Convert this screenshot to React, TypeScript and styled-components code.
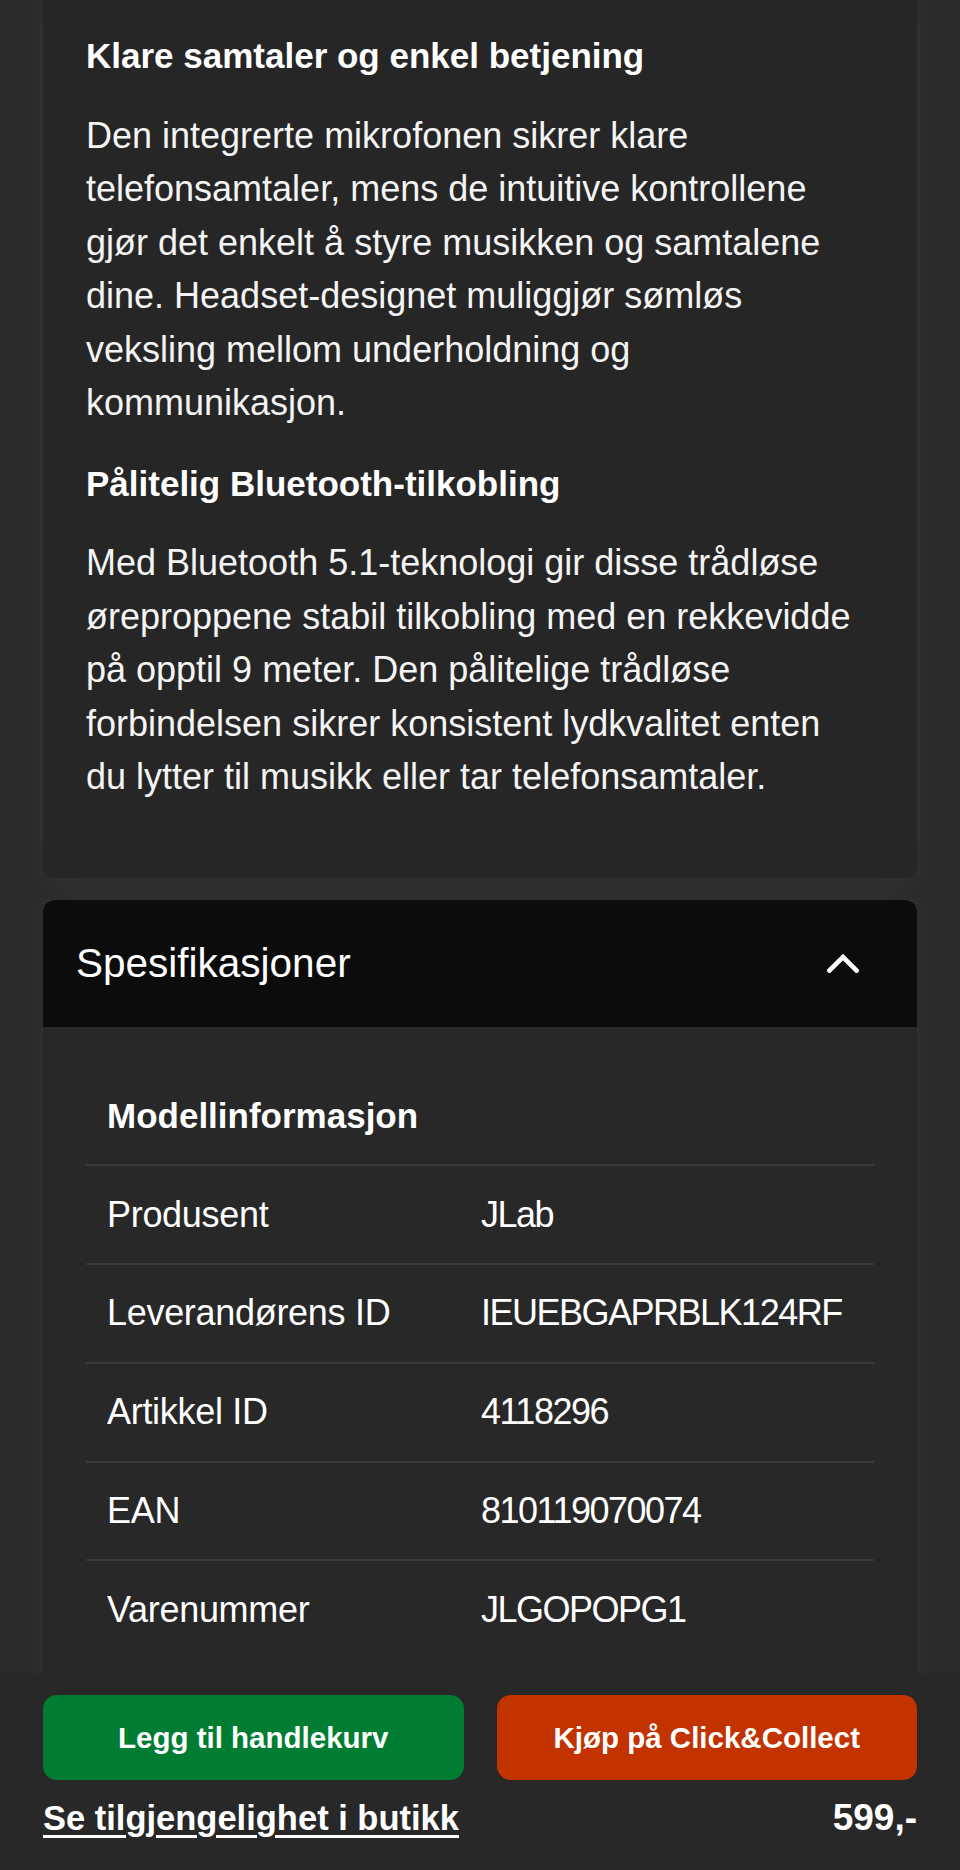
import React from "react";
import styled, { createGlobalStyle } from "styled-components";

const GlobalStyle = createGlobalStyle`
  html, body {
    margin: 0;
    padding: 0;
    background: #2a2a2a;
  }
  body {
    font-family: "Liberation Sans", Arial, sans-serif;
    color: #ffffff;
    -webkit-font-smoothing: antialiased;
  }
  * { box-sizing: border-box; }
`;

const Page = styled.main`
  display: flex;
  flex-direction: column;
  gap: 22px;
  padding: 0 43px;
`;

const Card = styled.section`
  background: #262626;
  border-radius: 0 0 12px 12px;
  box-shadow: 0 0 26px 6px rgba(255, 255, 255, 0.035);
  padding: 33px 56px 43px 43px;
`;

const Heading = styled.h3`
  margin: 0 0 30px;
  font-size: 35px;
  line-height: 45.5px;
  font-weight: 700;
  color: #ffffff;
`;

const Paragraph = styled.p`
  margin: 0 0 31px;
  font-size: 36px;
  line-height: 53.5px;
  font-weight: 400;
  color: #f4f4f4;
`;

const SpecCard = styled.section`
  background: #282828;
  border-radius: 12px 12px 0 0;
  box-shadow: 0 0 26px 6px rgba(255, 255, 255, 0.035);
  overflow: hidden;
`;

const SpecHeader = styled.button`
  all: unset;
  box-sizing: border-box;
  display: flex;
  align-items: center;
  justify-content: space-between;
  width: 100%;
  height: 127px;
  padding: 0 58px 0 33px;
  background: #0c0c0c;
  border-radius: 12px 12px 0 0;
  cursor: pointer;
`;

const SpecTitle = styled.span`
  font-family: "Liberation Sans", Arial, sans-serif;
  font-size: 40.5px;
  font-weight: 400;
  color: #ffffff;
  line-height: 1;
`;

const SpecBody = styled.div`
  padding: 41px 43px 210px;
`;

const Row = styled.div<{ $head?: boolean }>`
  display: grid;
  grid-template-columns: 374px 1fr;
  padding: 21.4px 21px;
  border-top: ${(p) => (p.$head ? "none" : "2px solid #393939")};
  font-size: ${(p) => (p.$head ? "35px" : "36px")};
  font-weight: ${(p) => (p.$head ? 700 : 400)};
  line-height: 54px;
  color: #ffffff;
`;

const Label = styled.span`
  letter-spacing: -0.3px;
`;

const Value = styled.span`
  letter-spacing: -1.5px;
`;

const Footer = styled.footer`
  position: fixed;
  left: 0;
  right: 0;
  bottom: 0;
  height: 197px;
  background: #282828;
  padding: 22px 43px 0;
  display: flex;
  flex-direction: column;
`;

const ButtonRow = styled.div`
  display: grid;
  grid-template-columns: 1fr 1fr;
  gap: 33px;
`;

const ActionButton = styled.button<{ $tone: "green" | "orange" }>`
  height: 85px;
  border: none;
  border-radius: 14px;
  background: ${(p) => (p.$tone === "green" ? "#007d32" : "#c23300")};
  color: #ffffff;
  font-family: "Liberation Sans", Arial, sans-serif;
  font-size: 29.5px;
  font-weight: 700;
  cursor: pointer;
`;

const InfoRow = styled.div`
  display: flex;
  align-items: baseline;
  justify-content: space-between;
  margin-top: 18px;
`;

const StoreLink = styled.a`
  font-size: 34.5px;
  line-height: 40px;
  font-weight: 700;
  color: #ffffff;
  text-decoration: underline;
  text-decoration-thickness: 3px;
  text-underline-offset: 5px;
  cursor: pointer;
`;

const Price = styled.span`
  font-size: 37px;
  line-height: 40px;
  font-weight: 700;
  color: #ffffff;
`;

const Chevron = () => (
  <svg width="32" height="20" viewBox="0 0 32 20" fill="none" aria-hidden="true">
    <polyline
      points="2.5,17.5 16,4 29.5,17.5"
      stroke="#ffffff"
      strokeWidth="4.6"
      strokeLinecap="square"
      strokeLinejoin="miter"
    />
  </svg>
);

const specs: [string, string][] = [
  ["Produsent", "JLab"],
  ["Leverandørens ID", "IEUEBGAPRBLK124RF"],
  ["Artikkel ID", "4118296"],
  ["EAN", "810119070074"],
  ["Varenummer", "JLGOPOPG1"],
];

export default function App() {
  return (
    <>
      <GlobalStyle />
      <Page>
        <Card>
          <Heading>Klare samtaler og enkel betjening</Heading>
          <Paragraph>
            Den integrerte mikrofonen sikrer klare telefonsamtaler, mens de intuitive kontrollene
            gjør det enkelt å styre musikken og samtalene dine. Headset-designet muliggjør sømløs
            veksling mellom underholdning og kommunikasjon.
          </Paragraph>
          <Heading>Pålitelig Bluetooth-tilkobling</Heading>
          <Paragraph>
            Med Bluetooth 5.1-teknologi gir disse trådløse øreproppene stabil tilkobling med en
            rekkevidde på opptil 9 meter. Den pålitelige trådløse forbindelsen sikrer konsistent
            lydkvalitet enten du lytter til musikk eller tar telefonsamtaler.
          </Paragraph>
        </Card>
        <SpecCard>
          <SpecHeader type="button">
            <SpecTitle>Spesifikasjoner</SpecTitle>
            <Chevron />
          </SpecHeader>
          <SpecBody>
            <Row $head>
              <span>Modellinformasjon</span>
            </Row>
            {specs.map(([label, value]) => (
              <Row key={label}>
                <Label>{label}</Label>
                <Value>{value}</Value>
              </Row>
            ))}
          </SpecBody>
        </SpecCard>
      </Page>
      <Footer>
        <ButtonRow>
          <ActionButton $tone="green">Legg til handlekurv</ActionButton>
          <ActionButton $tone="orange">Kjøp på Click&amp;Collect</ActionButton>
        </ButtonRow>
        <InfoRow>
          <StoreLink>Se tilgjengelighet i butikk</StoreLink>
          <Price>599,-</Price>
        </InfoRow>
      </Footer>
    </>
  );
}
